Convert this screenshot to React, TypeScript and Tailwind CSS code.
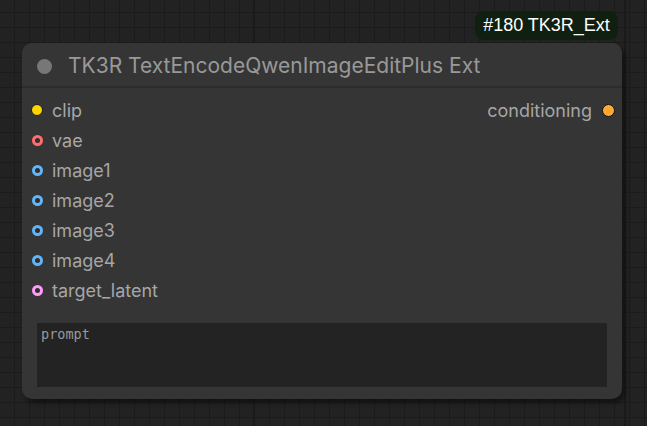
import React from 'react';

type Slot = { name: string; color: string; ring: boolean };

const inputs: Slot[] = [
  { name: 'clip', color: 'bg-[#ffd500]', ring: false },
  { name: 'vae', color: 'border-[#ff6e6e]', ring: true },
  { name: 'image1', color: 'border-[#64b5f6]', ring: true },
  { name: 'image2', color: 'border-[#64b5f6]', ring: true },
  { name: 'image3', color: 'border-[#64b5f6]', ring: true },
  { name: 'image4', color: 'border-[#64b5f6]', ring: true },
  { name: 'target_latent', color: 'border-[#ff9cf9]', ring: true },
];

const SlotDot: React.FC<{ slot: Slot }> = ({ slot }) =>
  slot.ring ? (
    <span className={`block w-[11px] h-[11px] rounded-full border-[3.5px] bg-[#2f2f2f] ${slot.color}`} />
  ) : (
    <span className={`block w-[12px] h-[12px] rounded-full border border-[#1e1e1e] ${slot.color}`} />
  );

export default function App() {
  return (
    <div
      className="relative w-[647px] h-[426px] overflow-hidden bg-[#222222] bg-[image:linear-gradient(to_right,#1b1b1b_1px,transparent_1px),linear-gradient(to_bottom,#1b1b1b_1px,transparent_1px)] bg-[size:15px_15px] bg-[position:14px_12px]"
      style={{ fontFamily: 'Inter, "Noto Sans", sans-serif' }}
    >
      {/* major grid lines */}
      <div className="absolute top-0 bottom-0 left-[253px] w-[2px] bg-[#1a1a1a]" />
      <div className="absolute top-0 bottom-0 left-[624px] w-[2px] bg-[#1a1a1a]" />

      {/* id badge */}
      <div className="absolute left-[475px] top-[11px] w-[143px] h-[29px] rounded-[9px] bg-[#0f1f10] flex items-center justify-center text-white text-[18px] font-['Liberation_Sans',Arial,sans-serif]">
        #180 TK3R_Ext
      </div>

      {/* node */}
      <div className="absolute left-[22px] top-[43px] w-[600px] h-[356px] rounded-[10px] bg-[#353535] shadow-[3px_4px_4px_rgba(0,0,0,0.45)] flex flex-col">
        <div className="h-[45px] pt-[3px] flex items-center border-b-2 border-[#2c2c2c] rounded-t-[10px] bg-[#353535]">
          <span className="ml-[15px] w-[15px] h-[15px] rounded-full bg-[#777777]" />
          <span className="ml-[16px] text-[21px] text-[#999999]">TK3R TextEncodeQwenImageEditPlus Ext</span>
        </div>

        <div className="relative pt-[7px]">
          {inputs.map((slot, i) => (
            <div key={slot.name} className="h-[30px] flex items-center">
              <div className="w-[30px] flex justify-center">
                <SlotDot slot={slot} />
              </div>
              <span className="text-[18px] text-[#a6a6a6]">{slot.name}</span>
              {i === 0 && (
                <div className="ml-auto flex items-center">
                  <span className="text-[18px] text-[#a6a6a6]">conditioning</span>
                  <span className="ml-[10px] mr-[7px] block w-[13px] h-[13px] rounded-full border border-[#111111] bg-[#ffa931]" />
                </div>
              )}
            </div>
          ))}
        </div>

        <div className="mx-[15px] mt-[18px] h-[64px] bg-[#232323] px-[4px] leading-[20px]">
          <span className="text-[13.5px] text-[#9a9a9a] font-['DejaVu_Sans_Mono',monospace]">prompt</span>
        </div>
      </div>
    </div>
  );
}
